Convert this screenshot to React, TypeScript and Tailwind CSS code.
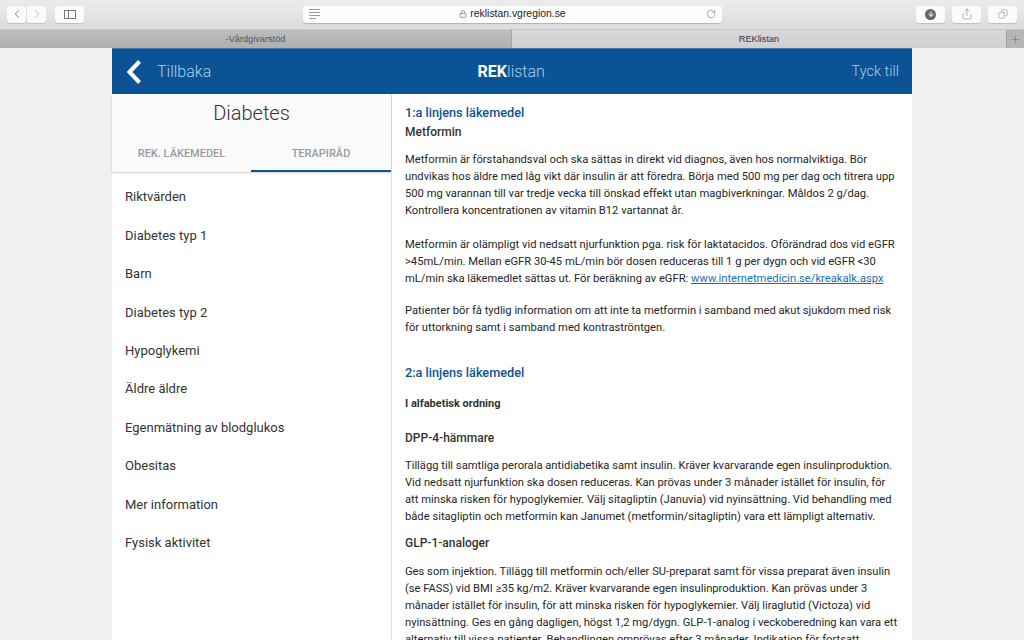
import React from "react";
import { ChevronLeft, ChevronRight, Plus, RotateCw, Lock, ArrowDown, Share, Copy } from "lucide-react";

const menu = ["Riktvärden","Diabetes typ 1","Barn","Diabetes typ 2","Hypoglykemi","Äldre äldre","Egenmätning av blodglukos","Obesitas","Mer information","Fysisk aktivitet"];

function Btn({ className = "", children }: { className?: string; children: React.ReactNode }) {
  return <div className={`h-[17px] bg-[#fbfbfb] rounded-[3px] shadow-[0_1px_1px_rgba(0,0,0,0.15)] flex items-center justify-center ${className}`}>{children}</div>;
}

function P({ children, className = "" }: { children: React.ReactNode; className?: string }) {
  return <p className={`text-[11.2px] leading-[17px] text-[#262626] ${className}`}>{children}</p>;
}

export default function App() {
  return (
    <div className="w-[1024px] h-[640px] overflow-hidden bg-[#f0f0f0] flex flex-col font-['Roboto',sans-serif]">
      <div className="h-[29px] shrink-0 bg-gradient-to-b from-[#ececec] to-[#dcdcdc] flex items-center pl-[7px] pr-[7px] pb-[1px]">
        <Btn className="w-[19px] mr-[1px]"><ChevronLeft size={14} strokeWidth={1.4} className="text-[#666]" /></Btn>
        <Btn className="w-[19px] mr-[9px]"><ChevronRight size={14} strokeWidth={1.4} className="text-[#b5b5b5]" /></Btn>
        <Btn className="w-[29px]">
          <div className="w-[12px] h-[9px] border border-[#777] flex"><div className="w-[4px] border-r border-[#777]" /></div>
        </Btn>
        <div className="ml-[219px] w-[419px] h-[17px] bg-[#fdfdfd] rounded-[3px] shadow-[0_1px_1px_rgba(0,0,0,0.2)] flex items-center px-[6px]">
          <div className="flex flex-col gap-[2px] w-[11px]">
            <div className="h-px bg-[#999]" /><div className="h-px bg-[#999]" /><div className="h-px bg-[#999]" /><div className="h-px w-[7px] bg-[#999]" />
          </div>
          <div className="flex-1 flex items-center justify-center gap-[3px] pr-[2px] ml-[1px]">
            <Lock size={8} strokeWidth={2.5} className="text-[#888]" />
            <span className="text-[10.4px] text-[#222] font-['Liberation_Sans',sans-serif]">reklistan.vgregion.se</span>
          </div>
          <RotateCw size={10} strokeWidth={1.4} className="text-[#777]" />
        </div>
        <Btn className="w-[29px] ml-[194px]">
          <div className="w-[11px] h-[11px] rounded-full bg-[#666] flex items-center justify-center"><ArrowDown size={8} strokeWidth={3} className="text-white" /></div>
        </Btn>
        <Btn className="w-[29px] ml-[7px]"><Share size={12} strokeWidth={1.1} className="text-[#777]" /></Btn>
        <Btn className="w-[29px] ml-[7px]"><Copy size={10} strokeWidth={1.2} className="text-[#777] scale-x-[-1]" /></Btn>
      </div>
      <div className="h-[19px] shrink-0 flex text-[9.2px] leading-[19px] text-center border-t border-[#c8c8c8] font-['Liberation_Sans',sans-serif]">
        <div className="w-[512px] bg-gradient-to-b from-[#bdbdbd] to-[#b0b0b0] text-[#555] border-r border-[#a5a5a5]">-Vårdgivarstöd</div>
        <div className="w-[494px] bg-gradient-to-b from-[#d9d9d9] to-[#cfcfcf] text-[#333]">REKlistan</div>
        <div className="w-[18px] bg-[#b5b5b5] border-l border-[#a0a0a0] flex items-center justify-center"><Plus size={11} strokeWidth={1} className="text-[#666]" /></div>
      </div>
      <div className="w-[800px] ml-[112px] flex-1 min-h-0 flex flex-col">
        <header className="h-[46px] shrink-0 bg-[#0b5394] border-t border-[#3f79ab] pt-[1px] flex items-center text-[#a9cfee] text-[16px] font-light">
          <svg width="16" height="26" viewBox="0 0 16 26" className="ml-[14px] shrink-0" fill="none" aria-hidden="true">
            <polyline points="13.5,2.5 3.5,13 13.5,23.5" stroke="#ffffff" strokeWidth="4" />
          </svg>
          <span className="ml-[15px] w-[54px]">Tillbaka</span>
          <div className="flex-1 text-center text-[16px] pr-[40px]"><b className="font-bold text-white">REK</b>listan</div>
          <span className="mr-[13px] text-[14.5px]">Tyck till</span>
        </header>
        <div className="flex-1 min-h-0 flex bg-white">
          <aside className="w-[280px] shrink-0 border-r border-[#e2e2e2]">
            <div className="bg-[#fafafa] h-[78px] shadow-[0_1px_2px_rgba(0,0,0,0.2)] flex flex-col">
              <h1 className="text-[20px] font-light text-[#333] text-center leading-[24px] mt-[7px]">Diabetes</h1>
              <div className="flex mt-auto h-[41px] text-[11px] font-medium text-[#9a9a9a]">
                <div className="w-[139px] text-center pt-[15px]">REK. LÄKEMEDEL</div>
                <div className="w-[140px] text-center pt-[15px] border-b-2 border-[#0b5394]">TERAPIRÅD</div>
              </div>
            </div>
            <ul className="pt-[6px] pl-[13px] text-[#333] text-[13px]">
              {menu.map((m) => <li key={m} className="h-[38.4px] flex items-center">{m}</li>)}
            </ul>
          </aside>
          <main className="flex-1 min-w-0 pl-[13px] pr-[14px] pt-[10px]">
            <h2 className="text-[12.7px] leading-[18px] font-medium text-[#0b5394]">1:a linjens läkemedel</h2>
            <h3 className="text-[12px] leading-[18px] font-medium text-[#333] mt-[1px]">Metformin</h3>
            <P className="mt-[10px]">Metformin är förstahandsval och ska sättas in direkt vid diagnos, även hos normalviktiga. Bör undvikas hos äldre med låg vikt där insulin är att föredra. Börja med 500 mg per dag och titrera upp 500 mg varannan till var tredje vecka till önskad effekt utan magbiverkningar. Måldos 2 g/dag. Kontrollera koncentrationen av vitamin B12 vartannat år.</P>
            <P className="mt-[17px]">Metformin är olämpligt vid nedsatt njurfunktion pga. risk för laktatacidos. Oförändrad dos vid eGFR &gt;45mL/min. Mellan eGFR 30-45 mL/min bör dosen reduceras till 1 g per dygn och vid eGFR &lt;30 mL/min ska läkemedlet sättas ut. För beräkning av eGFR: <a className="text-[#1a6fb5] underline">www.internetmedicin.se/kreakalk.aspx</a></P>
            <P className="mt-[15px]">Patienter bör få tydlig information om att inte ta metformin i samband med akut sjukdom med risk för uttorkning samt i samband med kontraströntgen.</P>
            <h2 className="text-[12.7px] leading-[18px] font-medium text-[#0b5394] mt-[28px]">2:a linjens läkemedel</h2>
            <h4 className="text-[11px] leading-[16px] font-bold text-[#333] mt-[14px]">I alfabetisk ordning</h4>
            <h3 className="text-[12px] leading-[18px] font-medium text-[#333] mt-[17px]">DPP-4-hämmare</h3>
            <P className="mt-[10px]">Tillägg till samtliga perorala antidiabetika samt insulin. Kräver kvarvarande egen insulinproduktion. Vid nedsatt njurfunktion ska dosen reduceras. Kan prövas under 3 månader istället för insulin, för att minska risken för hypoglykemier. Välj sitagliptin (Januvia) vid nyinsättning. Vid behandling med både sitagliptin och metformin kan Janumet (metformin/sitagliptin) vara ett lämpligt alternativ.</P>
            <h3 className="text-[12px] leading-[18px] font-medium text-[#333] mt-[9px]">GLP-1-analoger</h3>
            <P className="mt-[11px]">Ges som injektion. Tillägg till metformin och/eller SU-preparat samt för vissa preparat även insulin (se FASS) vid BMI ≥35 kg/m2. Kräver kvarvarande egen insulinproduktion. Kan prövas under 3 månader istället för insulin, för att minska risken för hypoglykemier. Välj liraglutid (Victoza) vid nyinsättning. Ges en gång dagligen, högst 1,2 mg/dygn. GLP-1-analog i veckoberedning kan vara ett alternativ till vissa patienter. Behandlingen omprövas efter 3 månader. Indikation för fortsatt</P>
          </main>
        </div>
      </div>
    </div>
  );
}
